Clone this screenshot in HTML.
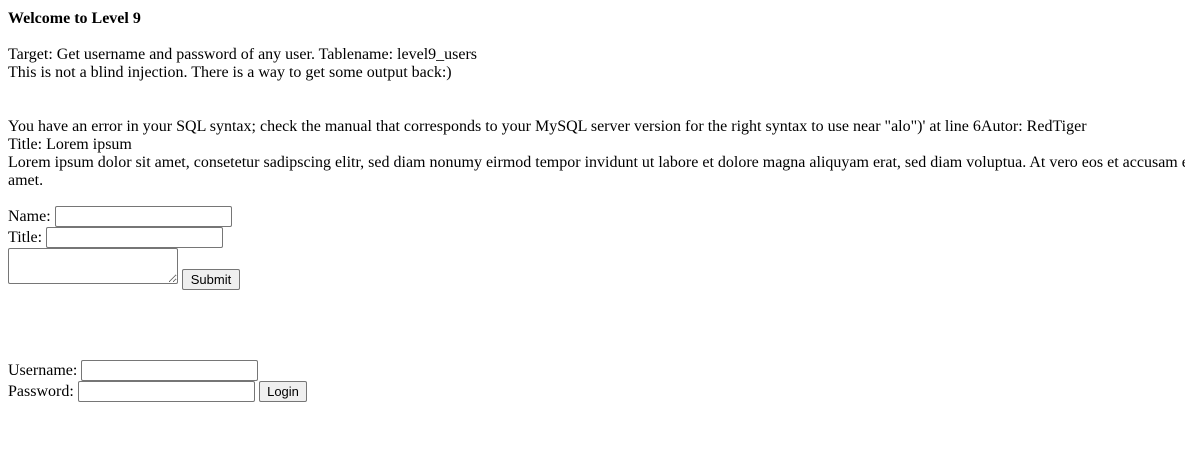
<!DOCTYPE html>
<html><head><meta charset="utf-8"><style>
body{margin:0;width:1185px;height:451px;overflow:hidden;background:#fff;font-family:"Liberation Serif",serif;font-size:16px;color:#000}
.t{position:absolute;left:8px;line-height:18px;white-space:nowrap}
input,textarea,button{position:absolute;box-sizing:border-box;margin:0}
input{height:21px;width:177px;border:1px solid #767676;border-radius:2px;background:#fff}
textarea{border:1px solid #767676;border-radius:2px;resize:both}
button{height:21px;font-family:"Liberation Sans",sans-serif;font-size:13px;background:#efefef;border:1px solid #767676;border-radius:2px;padding:0}
</style></head><body>
<div class="t" style="top:10px;font-weight:bold">Welcome to Level 9</div>
<div class="t" style="top:46px">Target: Get username and password of any user. Tablename: level9_users</div>
<div class="t" style="top:64px">This is not a blind injection. There is a way to get some output back:)</div>
<div class="t" style="top:118px">You have an error in your SQL syntax; check the manual that corresponds to your MySQL server version for the right syntax to use near "alo")' at line 6Autor: RedTiger</div>
<div class="t" style="top:136px">Title: Lorem ipsum</div>
<div class="t" style="top:154px">Lorem ipsum dolor sit amet, consetetur sadipscing elitr, sed diam nonumy eirmod tempor invidunt ut labore et dolore magna aliquyam erat, sed diam voluptua. At vero eos et accusam et justo</div>
<div class="t" style="top:172px">amet.</div>
<div class="t" style="top:208px">Name:</div>
<input style="left:55px;top:206px">
<div class="t" style="top:229px">Title:</div>
<input style="left:46px;top:227px">
<textarea style="left:8px;top:248px;width:170px;height:36px"></textarea>
<button style="left:182px;top:269px;width:58px">Submit</button>
<div class="t" style="top:362px">Username:</div>
<input style="left:81px;top:360px">
<div class="t" style="top:383px">Password:</div>
<input style="left:78px;top:381px">
<button style="left:259px;top:381px;width:48px">Login</button>
</body></html>
